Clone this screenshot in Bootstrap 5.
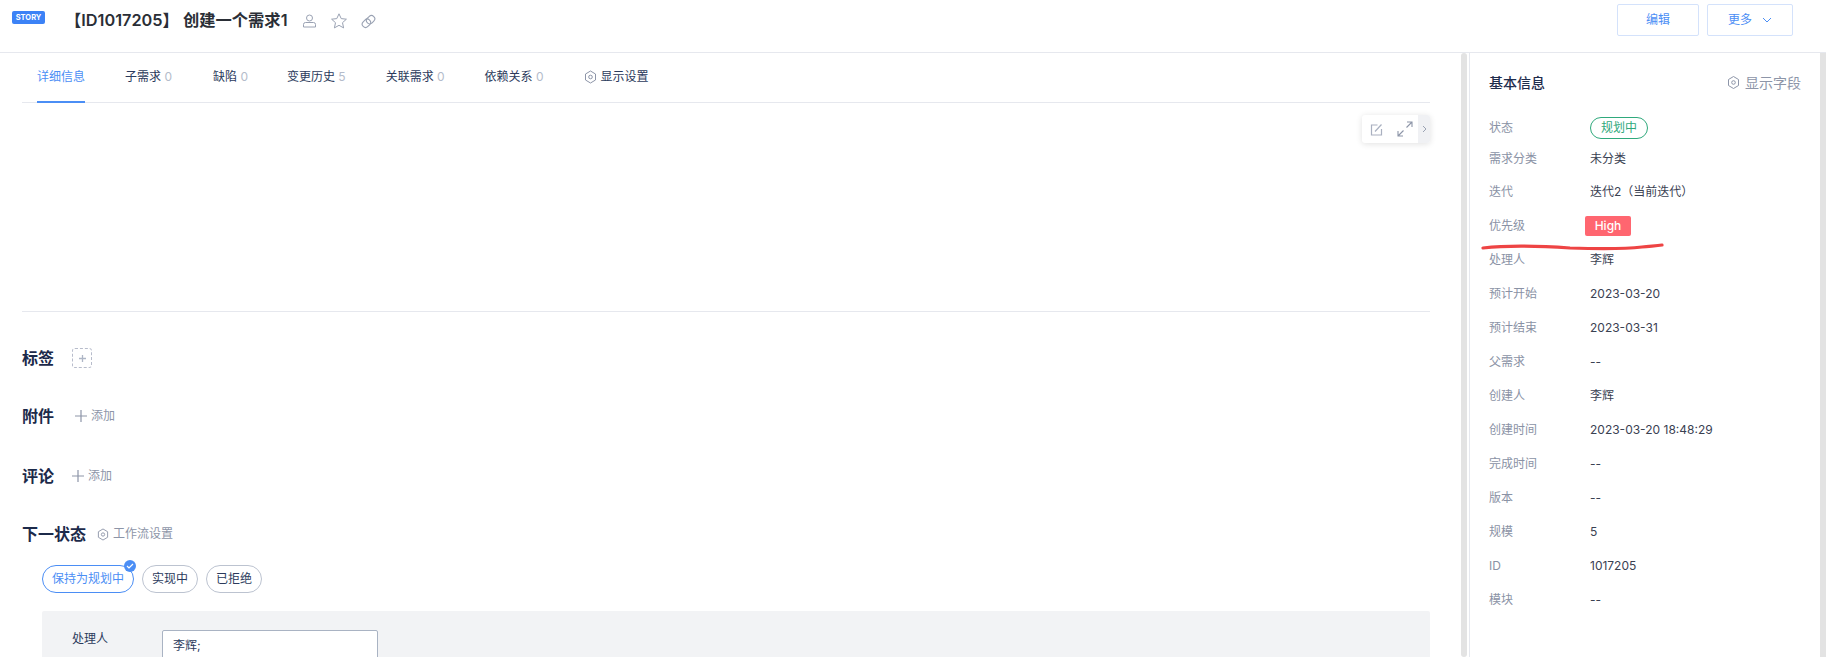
<!DOCTYPE html>
<html lang="zh-CN">
<head>
    <meta charset="UTF-8">
    <title>需求详情</title>
    <link href="https://cdn.jsdelivr.net/npm/bootstrap@5.3.0/dist/css/bootstrap.min.css" rel="stylesheet">
    <style>
        html, body { height: 657px; overflow: hidden; }
        body { font-family: Inter, "Noto Sans CJK SC", sans-serif; font-size: 12px; color: #1f2d4d; background: #fff; }
        .top-bar { height: 53px; border-bottom: 1px solid #e6e8ee; padding: 4px 0 0 12px; }
        .story-tag { width: 33px; height: 13px; margin-top: 7px; background: #3c82f6; color: #fff; font-size: 7.5px; font-weight: 700; line-height: 13px; text-align: center; border-radius: 2px; }
        .story-title { margin: 4px 0 0 20px; font-size: 16.3px; line-height: 24px; font-weight: 600; color: #2a2e36; }
        .title-icons { margin: 8px 0 0 14px; gap: 13px; }
        .head-btn { height: 32px; background: #fff; border: 1px solid #d4e2fb; border-radius: 2px; color: #4b8ef5; font-size: 12px; padding: 0; }
        .head-btn:hover { background: #fff; color: #4b8ef5; border-color: #d4e2fb; }
        .btn-edit { width: 82px; }
        .btn-more { width: 86px; }
        .page-wrap { height: 604px; }
        .main-pane { width: 1461px; padding: 0 31px 0 22px; overflow: hidden; }
        .scroll-thumb { width: 6px; margin-right: 2px; background: #e3e3e3; border-radius: 3px; }
        .side-pane { width: 351px; border-left: 1px solid #e6e8ee; padding: 0 0 0 19px; }
        .page-scroll { width: 6px; background: #e3e3e3; }
        .tab-strip { height: 50px; border-bottom: 1px solid #e6e8ee; gap: 0; font-size: 12px; color: #2b3a5c; }
        .tab-item { height: 50px; line-height: 48px; position: relative; white-space: nowrap; }
        .tab-item b { font-weight: 400; color: #b4bccb; }
        .tab-on { color: #4b8ef5; border-bottom: 2px solid #4b8ef5; }
        .editor-area { height: 209px; position: relative; border-bottom: 1px solid #e6e8ee; }
        .float-tools { position: absolute; top: 12px; right: 0; width: 68px; height: 28px; background: #fff; border-radius: 3px; box-shadow: 0 1px 6px rgba(0,0,0,.12); }
        .float-arrow { width: 12px; background: #f0f1f4; border-radius: 0 3px 3px 0; color: #9aa2b3; }
        .sec-title { font-size: 16px; font-weight: 600; color: #1c2a4a; line-height: 22px; }
        .sec-row { height: 22px; }
        .add-link { color: #8d95a8; font-size: 12px; gap: 4px; }
        .tag-add { width: 20px; height: 20px; border: 1px dashed #b7bccb; border-radius: 3px; color: #aeb6c6; margin-left: 18px; }
        .state-pill { height: 28px; line-height: 26px; padding: 0 9px; border: 1px solid #bcc3d0; border-radius: 14px; font-size: 12px; color: #2b3a5c; background: #fff; position: relative; }
        .state-on { border-color: #4b8ef5; color: #4b8ef5; }
        .state-check { position: absolute; top: -6px; right: -3px; width: 12px; height: 12px; border-radius: 50%; background: #4b8ef5; }
        .form-panel { height: 60px; margin-left: 20px; background: #f2f3f5; padding: 19px 0 0 30px; border-radius: 2px; }
        .form-label-txt { width: 90px; line-height: 17px; color: #2b3a5c; }
        .owner-input { width: 216px; height: 40px; background: #fff; border: 1px solid #a9b3c3; border-radius: 2px; padding: 6px 10px; font-size: 12px; color: #2b3a5c; }
        .side-head { height: 60px; padding: 0 19px 2px 0; }
        .side-title { font-size: 14px; font-weight: 500; color: #1f2d4d; }
        .side-field { font-size: 14px; color: #8d95a8; gap: 5px; }
        .info-row { height: 34px; font-size: 12px; }
        .info-row.info-first { height: 30px; }
        .info-row.info-second { height: 32px; }
        .info-label { width: 101px; color: #8a92a5; }
        .info-value { color: #3a4152; }
        .status-pill { height: 22px; line-height: 20px; padding: 0 10px; border: 1px solid #2fa97c; border-radius: 11px; color: #2fa97c; }
        .prio-tag { width: 46px; height: 20px; line-height: 20px; margin-left: -5px; text-align: center; background: #ff6670; color: #fff; border-radius: 2px; font-weight: 500; }
        .red-mark { position: absolute; left: 1480px; top: 240px; pointer-events: none; }
    </style>
</head>
<body>

<!-- header -->
<div class="top-bar d-flex align-items-start">
    <div class="story-tag">STORY</div>
    <div class="story-title">【ID1017205】 创建一个需求1</div>
    <div class="title-icons d-flex align-items-center">
        <svg width="15" height="16" viewBox="0 0 15 16" fill="none" stroke="#9aa2b3" stroke-width="1"><circle cx="7.5" cy="5" r="3"/><path d="M1.5 14v-2.5a2 2 0 0 1 2-2h8a2 2 0 0 1 2 2V14z"/></svg>
        <svg width="18" height="18" viewBox="0 0 18 18" fill="none" stroke="#9aa2b3" stroke-width="1"><path d="M9 1.8l2.2 4.8 5.2.6-3.9 3.5 1.1 5.2L9 13.3l-4.6 2.6 1.1-5.2-3.9-3.5 5.2-.6z"/></svg>
        <svg width="15" height="15" viewBox="0 0 15 15" fill="none" stroke="#9aa2b3" stroke-width="1.1"><rect x="0.9" y="6" width="9" height="6.6" rx="3.3" transform="rotate(-45 5.4 9.3)"/><rect x="5.1" y="2.4" width="9" height="6.6" rx="3.3" transform="rotate(-45 9.6 5.7)"/></svg>
    </div>
    <div class="ms-auto d-flex" style="gap:8px;margin-right:33px">
        <button class="btn head-btn btn-edit">编辑</button>
        <button class="btn head-btn btn-more d-flex align-items-center justify-content-center" style="gap:10px">更多
            <svg width="10" height="6" viewBox="0 0 10 6" fill="none" stroke="#4b8ef5"><path d="M1 1l4 4 4-4"/></svg>
        </button>
    </div>
</div>

<div class="page-wrap d-flex">
    <!-- left -->
    <div class="main-pane">
        <div class="tab-strip d-flex">
            <div class="tab-item tab-on" style="margin-left:15px">详细信息</div>
            <div class="tab-item" style="margin-left:40px">子需求 <b>0</b></div>
            <div class="tab-item" style="margin-left:41px">缺陷 <b>0</b></div>
            <div class="tab-item" style="margin-left:39px">变更历史 <b>5</b></div>
            <div class="tab-item" style="margin-left:40px">关联需求 <b>0</b></div>
            <div class="tab-item" style="margin-left:40px">依赖关系 <b>0</b></div>
            <div class="tab-item d-flex align-items-center" style="margin-left:40px;gap:4px;padding-bottom:2px">
                <svg width="13" height="14" viewBox="0 0 13 14" fill="none" stroke="#8d95a8"><path d="M6.5 1l5 3v6l-5 3-5-3V4z"/><circle cx="6.5" cy="7" r="1.8"/></svg>显示设置
            </div>
        </div>
        <div class="editor-area">
            <div class="float-tools d-flex">
                <div class="flex-grow-1 d-flex align-items-center" style="padding-left:8px;gap:14px">
                    <svg width="13" height="13" viewBox="0 0 13 13" fill="none" stroke="#a9b0c0" stroke-width="1.2"><path d="M11.5 6v6h-10V2h6"/><path d="M5 8.5l6.5-7"/></svg>
                    <svg width="16" height="16" viewBox="0 0 16 16" fill="none" stroke="#8d95a8" stroke-width="1.1"><path d="M9.5 6.5L15 1M10 1h5v5M6.5 9.5L1 15M1 10v5h5"/></svg>
                </div>
                <div class="float-arrow d-flex align-items-center justify-content-center">
                    <svg width="5" height="8" viewBox="0 0 5 8" fill="none" stroke="#9aa2b3"><path d="M1 1l3 3-3 3"/></svg>
                </div>
            </div>
        </div>

        <div class="sec-row d-flex align-items-center" style="margin-top:35px">
            <div class="sec-title">标签</div>
            <div class="tag-add d-flex align-items-center justify-content-center">
                <svg width="9" height="9" viewBox="0 0 9 9" stroke="#aeb6c6" stroke-width="1.3"><path d="M4.5 1v7M1 4.5h7"/></svg>
            </div>
        </div>
        <div class="sec-row d-flex align-items-center" style="margin-top:36px">
            <div class="sec-title">附件</div>
            <div class="add-link d-flex align-items-center" style="margin-left:21px">
                <svg width="12" height="12" viewBox="0 0 12 12" stroke="#8d95a8" stroke-width="1.2"><path d="M6 0v12M0 6h12"/></svg>添加
            </div>
        </div>
        <div class="sec-row d-flex align-items-center" style="margin-top:38px">
            <div class="sec-title">评论</div>
            <div class="add-link d-flex align-items-center" style="margin-left:18px">
                <svg width="12" height="12" viewBox="0 0 12 12" stroke="#8d95a8" stroke-width="1.2"><path d="M6 0v12M0 6h12"/></svg>添加
            </div>
        </div>
        <div class="sec-row d-flex align-items-center" style="margin-top:36px">
            <div class="sec-title">下一状态</div>
            <div class="add-link d-flex align-items-center" style="margin-left:11px">
                <svg width="12" height="13" viewBox="0 0 13 14" fill="none" stroke="#8d95a8"><path d="M6.5 1l5 3v6l-5 3-5-3V4z"/><circle cx="6.5" cy="7" r="1.8"/></svg>工作流设置
            </div>
        </div>
        <div class="d-flex" style="margin:20px 0 0 20px;gap:8px">
            <div class="state-pill state-on">保持为规划中
                <span class="state-check d-flex align-items-center justify-content-center">
                    <svg width="8" height="6" viewBox="0 0 8 6" fill="none" stroke="#fff" stroke-width="1.2"><path d="M1 3l2 2 4-4"/></svg>
                </span>
            </div>
            <div class="state-pill">实现中</div>
            <div class="state-pill">已拒绝</div>
        </div>
        <div class="form-panel d-flex" style="margin-top:18px">
            <div class="form-label-txt">处理人</div>
            <div class="owner-input">李辉;</div>
        </div>
    </div>
    <div class="scroll-thumb"></div>

    <!-- right -->
    <div class="side-pane">
        <div class="side-head d-flex align-items-center justify-content-between">
            <div class="side-title">基本信息</div>
            <div class="side-field d-flex align-items-center">
                <svg width="13" height="15" viewBox="0 0 13 14" fill="none" stroke="#8d95a8"><path d="M6.5 1l5 3v6l-5 3-5-3V4z"/><circle cx="6.5" cy="7" r="1.8"/></svg>显示字段
            </div>
        </div>
        <div class="info-row info-first d-flex align-items-center"><div class="info-label">状态</div><div class="status-pill">规划中</div></div>
        <div class="info-row info-second d-flex align-items-center"><div class="info-label">需求分类</div><div class="info-value">未分类</div></div>
        <div class="info-row d-flex align-items-center"><div class="info-label">迭代</div><div class="info-value">迭代2（当前迭代）</div></div>
        <div class="info-row d-flex align-items-center"><div class="info-label">优先级</div><div class="prio-tag">High</div></div>
        <div class="info-row d-flex align-items-center"><div class="info-label">处理人</div><div class="info-value">李辉</div></div>
        <div class="info-row d-flex align-items-center"><div class="info-label">预计开始</div><div class="info-value">2023-03-20</div></div>
        <div class="info-row d-flex align-items-center"><div class="info-label">预计结束</div><div class="info-value">2023-03-31</div></div>
        <div class="info-row d-flex align-items-center"><div class="info-label">父需求</div><div class="info-value">--</div></div>
        <div class="info-row d-flex align-items-center"><div class="info-label">创建人</div><div class="info-value">李辉</div></div>
        <div class="info-row d-flex align-items-center"><div class="info-label">创建时间</div><div class="info-value">2023-03-20 18:48:29</div></div>
        <div class="info-row d-flex align-items-center"><div class="info-label">完成时间</div><div class="info-value">--</div></div>
        <div class="info-row d-flex align-items-center"><div class="info-label">版本</div><div class="info-value">--</div></div>
        <div class="info-row d-flex align-items-center"><div class="info-label">规模</div><div class="info-value">5</div></div>
        <div class="info-row d-flex align-items-center"><div class="info-label">ID</div><div class="info-value">1017205</div></div>
        <div class="info-row d-flex align-items-center"><div class="info-label">模块</div><div class="info-value">--</div></div>
    </div>
    <div class="page-scroll ms-auto"></div>
</div>

<!-- hand drawn red line over the side pane -->
<svg class="red-mark" width="190" height="14" viewBox="0 0 190 14" fill="none"><path d="M3 8C30 5 60 6 90 8c30 1 55 1 72-1 8-1 14-1 20-2" stroke="#ee4444" stroke-width="3.2" stroke-linecap="round"/></svg>

<script src="https://cdn.jsdelivr.net/npm/bootstrap@5.3.0/dist/js/bootstrap.bundle.min.js"></script>
</body>
</html>
